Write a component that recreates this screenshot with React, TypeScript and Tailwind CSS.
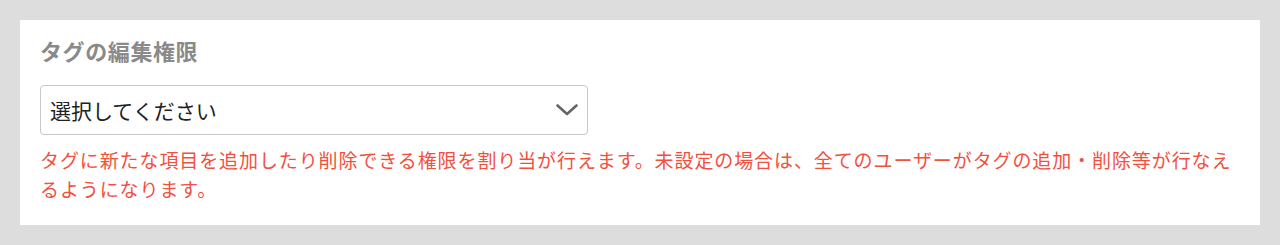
import React from 'react';

const JP = "font-['Noto_Sans_CJK_JP','Noto_Sans',sans-serif]";

const ChevronDown = () => (
  <svg width="22" height="12" viewBox="0 0 22 12" fill="none" aria-hidden="true">
    <path d="M1.5 1.5 L11 10 L20.5 1.5" stroke="#666666" strokeWidth="2.6" strokeLinecap="round" strokeLinejoin="round" />
  </svg>
);

export default function App() {
  return (
    <div className={`min-h-[245px] bg-[#dddddd] p-5 ${JP}`}>
      <div className="bg-white px-5 pt-4 pb-[22px]">
        {/* section title */}
        <h2 className="text-[22px] leading-[28px] font-bold tracking-[0.6px] text-[#8a8a8a]">
          タグの編集権限
        </h2>

        {/* select box */}
        <div className="mt-[21px] flex h-[50px] w-[548px] items-center justify-between rounded-[4px] border border-[#c8c8c8] pl-[9px] pr-[9px]">
          <span className="text-[21px] leading-none text-[#222222]">選択してください</span>
          <ChevronDown />
        </div>

        {/* help text */}
        <p className="mt-[10px] text-[19px] leading-[29px] tracking-[0.9px] text-[#f2503e]">
          タグに新たな項目を追加したり削除できる権限を割り当が行えます。未設定の場合は、全てのユーザーがタグの追加・削除等が行なえるようになります。
        </p>
      </div>
    </div>
  );
}
